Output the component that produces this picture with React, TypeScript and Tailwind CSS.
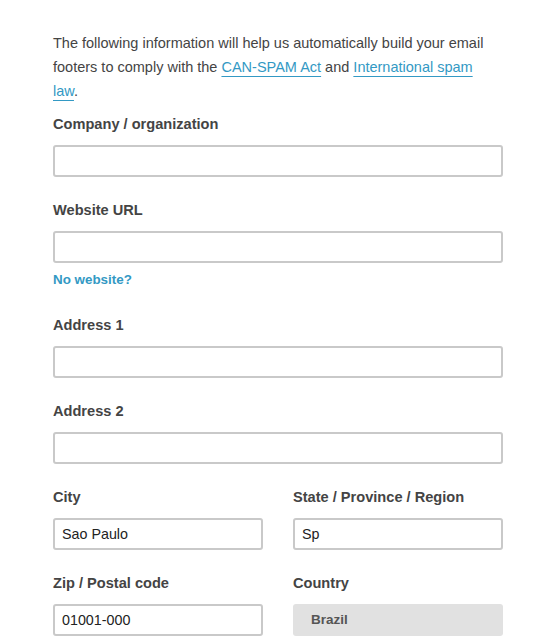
import React from "react";

const Label = ({ children, className = "" }: { children: React.ReactNode; className?: string }) => (
  <div className={`text-[14.6px] leading-[18px] font-bold text-[#444] ${className}`}>{children}</div>
);

const Input = ({ value = "" }: { value?: string }) => (
  <input
    readOnly
    value={value}
    className="mt-3 block h-8 w-full rounded-[3px] border-2 border-[#c9c9c9] bg-white px-[7px] text-[14.3px] text-[#222] outline-none"
    style={{ fontFamily: "'Liberation Sans', Arial, sans-serif" }}
  />
);

export default function App() {
  return (
    <div
      className="min-h-[641px] w-[542px] bg-white pl-[53px] pt-[31px] text-[#444]"
      style={{ fontFamily: "'Liberation Sans', Arial, sans-serif" }}
    >
      <div className="w-[450px]">
        <p className="w-[440px] text-[14.5px] leading-[24px] text-[#444]">
          The following information will help us automatically build your email footers to comply with the{" "}
          <a className="text-[#3399c4] underline decoration-1 underline-offset-[4px]">CAN-SPAM Act</a> and{" "}
          <a className="text-[#3399c4] underline decoration-1 underline-offset-[4px]">International spam law</a>.
        </p>

        <Label className="mt-3">Company / organization</Label>
        <Input />

        <Label className="mt-6">Website URL</Label>
        <Input />
        <div className="mt-2 text-[13.4px] leading-[18px] font-bold text-[#3399c4]">No website?</div>

        <Label className="mt-[27px]">Address 1</Label>
        <Input />

        <Label className="mt-6">Address 2</Label>
        <Input />

        <div className="mt-6 grid grid-cols-2 gap-x-[30px]">
          <div>
            <Label>City</Label>
            <Input value="Sao Paulo" />
          </div>
          <div>
            <Label>State / Province / Region</Label>
            <Input value="Sp" />
          </div>
          <div className="mt-6">
            <Label>Zip / Postal code</Label>
            <Input value="01001-000" />
          </div>
          <div className="mt-6">
            <Label>Country</Label>
            <div className="mt-3 flex h-8 items-center rounded-[3px] bg-[#e1e1e1] px-[18px] text-[13.5px] font-bold text-[#555]">
              Brazil
            </div>
          </div>
        </div>
      </div>
    </div>
  );
}
